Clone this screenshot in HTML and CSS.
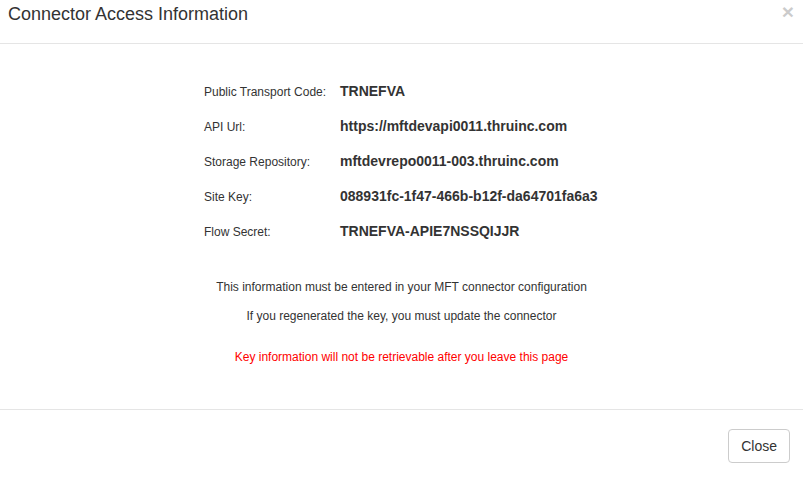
FILE: index.html
```html
<!DOCTYPE html>
<html lang="en">
<head>
<meta charset="utf-8">
<title>Connector Access Information</title>
<link rel="stylesheet" href="styles.css">
</head>
<body>
<div class="modal">
  <div class="modal-header">
    <h4 class="modal-title">Connector Access Information</h4>
    <button class="close" type="button" aria-label="Close">&times;</button>
  </div>
  <div class="modal-body">
    <div class="info">
      <div class="row"><span class="label">Public Transport Code:</span><span class="value">TRNEFVA</span></div>
      <div class="row"><span class="label">API Url:</span><span class="value">https://mftdevapi0011.thruinc.com</span></div>
      <div class="row"><span class="label">Storage Repository:</span><span class="value">mftdevrepo0011-003.thruinc.com</span></div>
      <div class="row"><span class="label">Site Key:</span><span class="value">088931fc-1f47-466b-b12f-da64701fa6a3</span></div>
      <div class="row"><span class="label">Flow Secret:</span><span class="value">TRNEFVA-APIE7NSSQIJJR</span></div>
    </div>
    <p class="note note-first">This information must be entered in your MFT connector configuration</p>
    <p class="note">If you regenerated the key, you must update the connector</p>
    <p class="note warn">Key information will not be retrievable after you leave this page</p>
  </div>
  <div class="modal-footer">
    <button class="btn" type="button">Close</button>
  </div>
</div>
</body>
</html>
```
FILE: styles.css
```css
html, body {
  margin: 0;
  padding: 0;
  background: #fff;
}
body {
  font-family: "Liberation Sans", Arial, sans-serif;
  color: #333;
  width: 803px;
  height: 477px;
  overflow: hidden;
}
.modal {
  width: 803px;
}
.modal-header {
  display: flex;
  justify-content: space-between;
  align-items: flex-start;
  box-sizing: border-box;
  height: 44px;
  padding: 4px 9px 0 8px;
  border-bottom: 1px solid #e5e5e5;
}
.modal-title {
  margin: 0;
  font-size: 18px;
  font-weight: normal;
  line-height: 20px;
  color: #333;
}
.close {
  margin-top: -3px;
  padding: 0;
  border: 0;
  background: transparent;
  font-family: "Liberation Sans", Arial, sans-serif;
  font-size: 21px;
  font-weight: bold;
  line-height: 1;
  color: #000;
  opacity: .2;
  text-shadow: 0 1px 0 #fff;
  cursor: pointer;
}
.modal-body {
  padding: 30px 0 42px;
}
.info {
  width: fit-content;
  margin: 0 auto 0 204px;
}
.row {
  display: flex;
  align-items: baseline;
  height: 35px;
  line-height: 35px;
}
.label {
  width: 136px;
  flex: none;
  font-size: 12px;
}
.value {
  font-size: 14px;
  font-weight: bold;
}
.note {
  margin: 0 0 9px;
  font-size: 12px;
  line-height: 20px;
  text-align: center;
}
.note-first {
  margin-top: 28px;
}
.warn {
  margin: 21px 0 0;
  color: #ff0000;
}
.modal-footer {
  border-top: 1px solid #e5e5e5;
  padding: 19px 13px 15px;
  text-align: right;
}
.btn {
  font-family: "Liberation Sans", Arial, sans-serif;
  font-size: 14px;
  line-height: 20px;
  padding: 6px 12px;
  color: #333;
  background: #fff;
  border: 1px solid #ccc;
  border-radius: 4px;
  cursor: pointer;
}
```
